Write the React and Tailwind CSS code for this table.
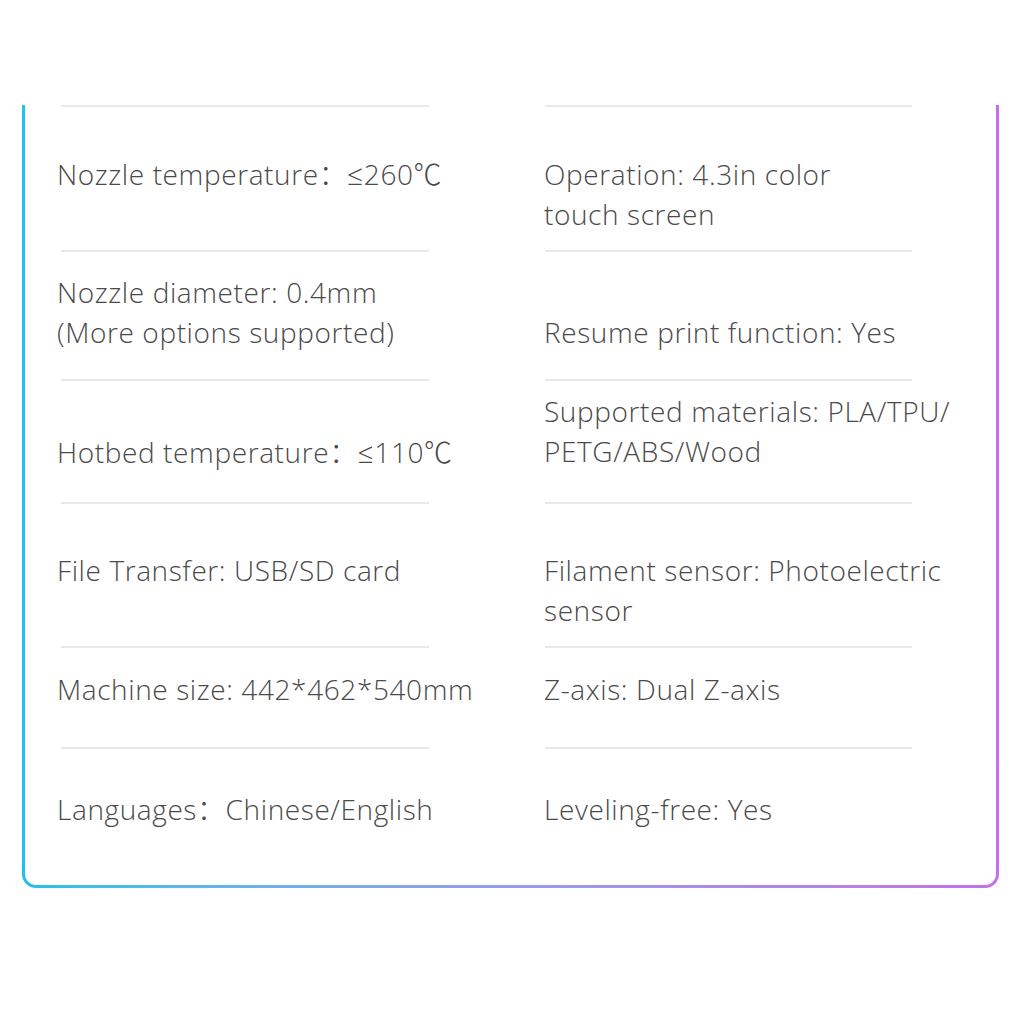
import React from "react";

const rows = [
  {
    h: 145,
    left: { pt: 47, lines: ["Nozzle temperature：≤260℃"] },
    right: { pt: 47, lines: ["Operation: 4.3in color", "touch screen"] },
  },
  {
    h: 129,
    left: { pt: 20, lines: ["Nozzle diameter: 0.4mm", "(More options supported)"] },
    right: { pt: 60, lines: ["Resume print function: Yes"] },
  },
  {
    h: 123,
    left: { pt: 51, lines: ["Hotbed temperature：≤110℃"] },
    right: { pt: 10, lines: ["Supported materials: PLA/TPU/", "PETG/ABS/Wood"] },
  },
  {
    h: 144,
    left: { pt: 46, lines: ["File Transfer: USB/SD card"] },
    right: { pt: 46, lines: ["Filament sensor: Photoelectric", "sensor"] },
  },
  {
    h: 101,
    left: { pt: 21, lines: ["Machine size: 442*462*540mm"] },
    right: { pt: 21, lines: ["Z-axis: Dual Z-axis"] },
  },
  {
    h: 135,
    left: { pt: 40, lines: ["Languages：Chinese/English"] },
    right: { pt: 40, lines: ["Leveling-free: Yes"] },
  },
];

function Cell({ cell, side }) {
  return (
    <div className={side === "left" ? "w-[519px] pl-[32px]" : "flex-1"}>
      <div
        className={
          side === "left"
            ? "ml-[4px] w-[368px] h-[2px] bg-[#e8e8e8]"
            : "ml-[1px] w-[367px] h-[2px] bg-[#e8e8e8]"
        }
      ></div>
      <div style={{ paddingTop: cell.pt }} className="text-[28px] leading-[40px] tracking-[0.6px] font-light text-[#4a4a4a] whitespace-nowrap">
        {cell.lines.map((l, i) => (
          <div key={i}>{l}</div>
        ))}
      </div>
    </div>
  );
}

export default function App() {
  return (
    <div
      className="w-[1024px] h-[1024px] bg-white pt-[105px] pl-[22px]"
      style={{ fontFamily: '"Open Sans", "Noto Sans CJK SC", sans-serif' }}
    >
      <div className="w-[977px] h-[783px] px-[3px] pb-[3px] rounded-b-[14px] bg-gradient-to-r from-[#1cc2ea] to-[#c470ea]">
        <div className="h-full bg-white rounded-b-[11px]">
          {rows.map((r, i) => (
            <div key={i} className="flex" style={{ height: r.h }}>
              <Cell cell={r.left} side="left" />
              <Cell cell={r.right} side="right" />
            </div>
          ))}
        </div>
      </div>
    </div>
  );
}
